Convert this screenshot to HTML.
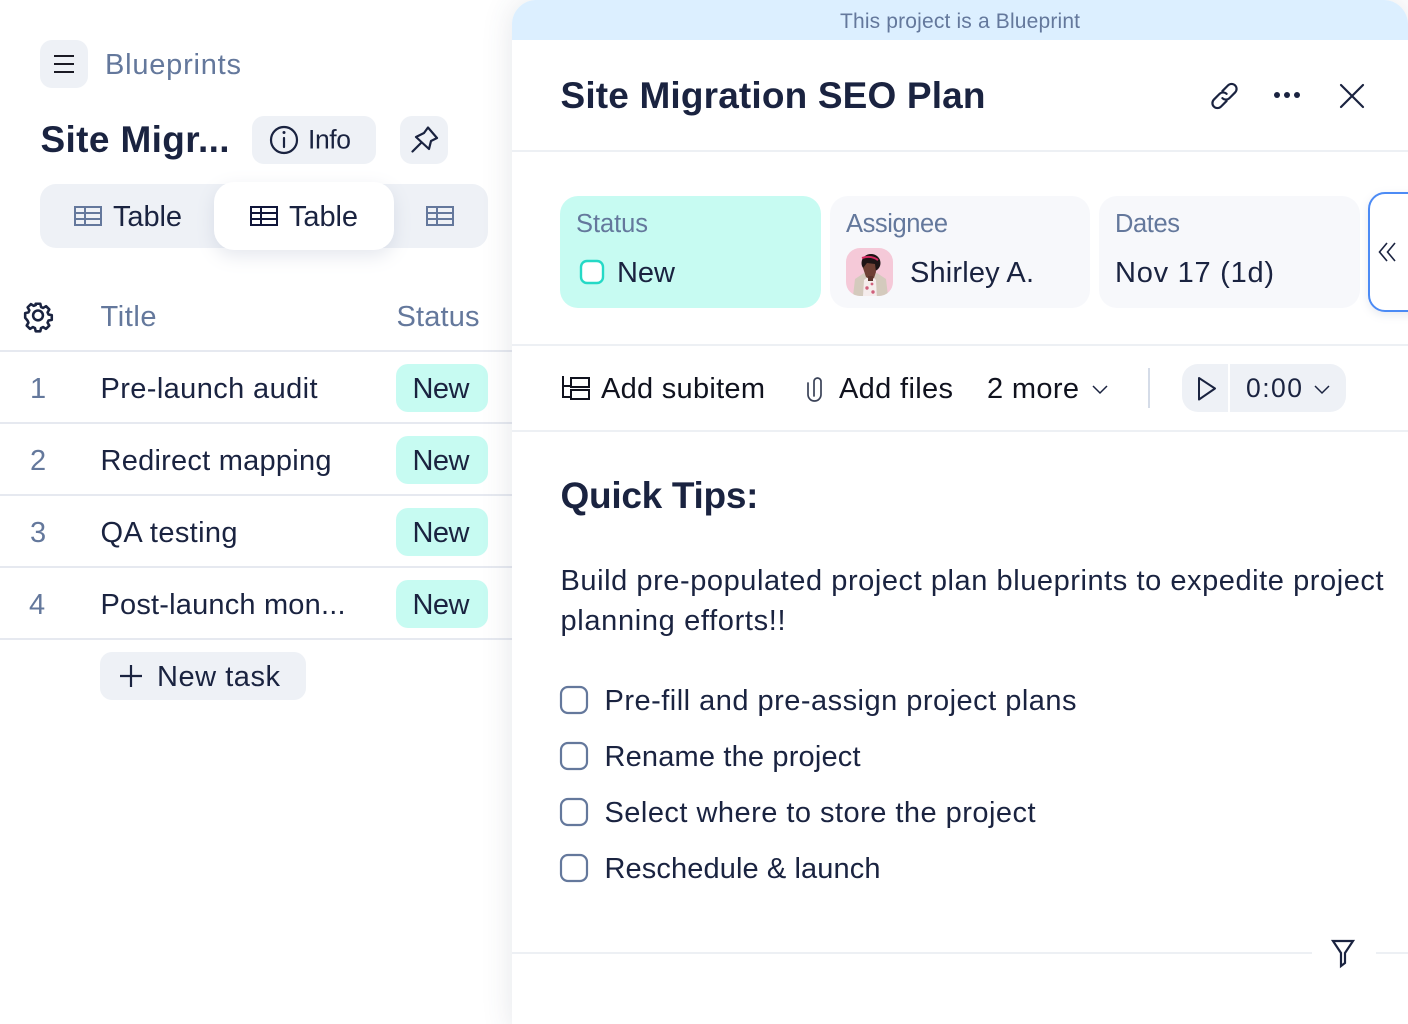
<!DOCTYPE html>
<html lang="en">
<head>
<meta charset="utf-8">
<title>Site Migration SEO Plan</title>
<style>
html,body{margin:0;padding:0;background:#fff;width:1408px;height:1024px;overflow:hidden}
svg{display:block}
text{font-family:"Liberation Sans",sans-serif;font-size:29px;fill:#1a2340}
.g{fill:#64789c}
.b{font-weight:700;font-size:37px}
.s{font-size:26.500px}
.ic{fill:none;stroke:#1a2340;stroke-width:2.2;stroke-linecap:round;stroke-linejoin:round}
.ig{fill:none;stroke:#64789c;stroke-width:2}
.ln{fill:#e6e9f0}
.rl{fill:#edf0f4}
.cb{fill:#fff;stroke:#64789c;stroke-width:2.200}
</style>
</head>
<body>
<svg width="1408" height="1024" viewBox="0 0 1408 1024" xmlns="http://www.w3.org/2000/svg">
<defs>
<filter id="ps" x="-20%" y="-10%" width="140%" height="120%"><feGaussianBlur stdDeviation="16"/></filter>
<filter id="ts" x="-30%" y="-50%" width="160%" height="220%"><feOffset dy="6"/><feGaussianBlur stdDeviation="9"/><feColorMatrix values="0 0 0 0 .2 0 0 0 0 .25 0 0 0 0 .4 0 0 0 .2 0"/></filter>
<filter id="cs" x="-50%" y="-30%" width="200%" height="160%"><feOffset dy="3"/><feGaussianBlur stdDeviation="5"/><feColorMatrix values="0 0 0 0 .2 0 0 0 0 .25 0 0 0 0 .4 0 0 0 .22 0"/></filter>
<clipPath id="av"><rect x="846" y="248" width="47" height="48" rx="14"/></clipPath>
</defs>

<!-- left header -->
<rect x="40" y="40" width="48" height="48" rx="12" fill="#eef1f6"/>
<path d="M54 56h20M54 64h20M54 72h20" stroke="#1a1a24" stroke-width="2" fill="none"/>
<text x="105" y="74" class="g" textLength="136" lengthAdjust="spacing">Blueprints</text>

<text x="40.500" y="152" class="b" textLength="189" lengthAdjust="spacing">Site Migr...</text>
<rect x="252" y="116" width="124" height="48" rx="12" fill="#eef1f6"/>
<circle cx="284" cy="140" r="13" class="ic" stroke-width="2"/>
<path d="M284 138v9" class="ic"/><circle cx="284" cy="132.500" r="1.500" fill="#1a2340"/>
<text x="308" y="148.500" class="s" textLength="43" lengthAdjust="spacing">Info</text>
<rect x="400" y="116" width="48" height="48" rx="12" fill="#eef1f6"/>
<path d="M412.500 151.500l9-9M428 127.500L437 138l-6 3-2 8-13-12 8-4z" class="ic" stroke-width="2"/>

<!-- tabs -->
<rect x="40" y="184" width="448" height="64" rx="16" fill="#eef1f6"/>
<g class="ig"><rect x="75" y="207" width="26" height="18"/><path d="M75 213h26M75 219h26M85 207v18"/></g>
<text x="113" y="226" textLength="69" lengthAdjust="spacing">Table</text>
<rect x="214" y="182" width="180" height="68" rx="20" fill="#000" filter="url(#ts)"/>
<rect x="214" y="182" width="180" height="68" rx="20" fill="#fff"/>
<g fill="none" stroke="#10163a" stroke-width="2"><rect x="251" y="207" width="26" height="18"/><path d="M251 213h26M251 219h26M261 207v18"/></g>
<text x="289" y="226" textLength="69" lengthAdjust="spacing">Table</text>
<g class="ig"><rect x="427" y="207" width="26" height="18"/><path d="M427 213h26M427 219h26M437 207v18"/></g>

<!-- table head -->
<g transform="translate(24 302) scale(1.167)"><path class="ic" stroke-width="1.800" d="M10 2h4l.6 2.800 1.800.8 2.500-1.500 2.800 2.800-1.500 2.500.8 1.800 2.800.6v4l-2.800.6-.8 1.800 1.500 2.500-2.800 2.800-2.500-1.500-1.800.8-.6 2.800h-4l-.6-2.800-1.800-.8-2.500 1.500-2.800-2.800 1.500-2.500-.8-1.800L1 14v-4l2.800-.6.800-1.800-1.500-2.500 2.800-2.800 2.500 1.500 1.800-.8z" transform="translate(0 -0.500)"/><circle cx="12" cy="11.500" r="4.200" class="ic" stroke-width="1.800"/></g>
<text x="100.500" y="326" class="g" textLength="56" lengthAdjust="spacing">Title</text>
<text x="396.500" y="326" class="g" textLength="83" lengthAdjust="spacing">Status</text>
<rect x="0" y="350" width="512" height="2" class="ln"/>

<!-- rows -->
<text x="30" y="398" class="g">1</text>
<text x="100.500" y="398" textLength="217" lengthAdjust="spacing">Pre-launch audit</text>
<rect x="396" y="364" width="92" height="48" rx="12" fill="#c7fbf2"/>
<text x="412.500" y="398" textLength="57" lengthAdjust="spacing">New</text>
<rect x="0" y="422" width="512" height="2" class="ln"/>

<text x="30" y="470" class="g">2</text>
<text x="100.500" y="470" textLength="231" lengthAdjust="spacing">Redirect mapping</text>
<rect x="396" y="436" width="92" height="48" rx="12" fill="#c7fbf2"/>
<text x="412.500" y="470" textLength="57" lengthAdjust="spacing">New</text>
<rect x="0" y="494" width="512" height="2" class="ln"/>

<text x="30" y="542" class="g">3</text>
<text x="100.500" y="542" textLength="137" lengthAdjust="spacing">QA testing</text>
<rect x="396" y="508" width="92" height="48" rx="12" fill="#c7fbf2"/>
<text x="412.500" y="542" textLength="57" lengthAdjust="spacing">New</text>
<rect x="0" y="566" width="512" height="2" class="ln"/>

<text x="29" y="614" class="g">4</text>
<text x="100.500" y="614" textLength="245" lengthAdjust="spacing">Post-launch mon...</text>
<rect x="396" y="580" width="92" height="48" rx="12" fill="#c7fbf2"/>
<text x="412.500" y="614" textLength="57" lengthAdjust="spacing">New</text>
<rect x="0" y="638" width="512" height="2" class="ln"/>

<rect x="100" y="652" width="206" height="48" rx="12" fill="#eef1f6"/>
<path d="M131 665v22M120 676h22" stroke="#1a2340" stroke-width="2.200" fill="none"/>
<text x="157" y="686" textLength="123" lengthAdjust="spacing">New task</text>

<!-- right panel -->
<rect x="512" y="0" width="896" height="1040" rx="24" fill="#3a4560" opacity=".13" filter="url(#ps)"/>
<path d="M512 1024V24C512 11 523 0 536 0h848c13 0 24 11 24 24v1000z" fill="#fff"/>
<path d="M512 40V24C512 11 523 0 536 0h848c13 0 24 11 24 24v16z" fill="#dcefff"/>
<text x="840" y="28" class="g" style="font-size:21px" textLength="240" lengthAdjust="spacing">This project is a Blueprint</text>

<text x="560.500" y="108" class="b" textLength="425" lengthAdjust="spacing">Site Migration SEO Plan</text>
<g class="ic" stroke-width="2" transform="translate(1224.500 96) rotate(-45)">
<path d="M2 -5H10a5 5 0 0 1 0 10H2a5 5 0 0 1-5-5"/>
<path d="M-2 5H-10a5 5 0 0 1 0-10H-2a5 5 0 0 1 5 5"/>
</g>
<circle cx="1277" cy="95" r="3" fill="#1a2340"/><circle cx="1287" cy="95" r="3" fill="#1a2340"/><circle cx="1297" cy="95" r="3" fill="#1a2340"/>
<path d="M1341 85l22 22M1363 85l-22 22" class="ic" stroke-width="2.200"/>
<rect x="512" y="150" width="896" height="2" class="rl"/>

<!-- cards -->
<rect x="560" y="196" width="261" height="112" rx="18" fill="#c7fbf2"/>
<text x="576" y="232" class="g" style="font-size:25.500px" textLength="72" lengthAdjust="spacing">Status</text>
<rect x="581" y="261" width="22" height="22" rx="6" fill="#fff" stroke="#25d9c6" stroke-width="2.400"/>
<text x="617" y="282" textLength="58" lengthAdjust="spacing">New</text>

<rect x="830" y="196" width="260" height="112" rx="18" fill="#f7f8fb"/>
<text x="846" y="232" class="g" style="font-size:25.500px" textLength="102" lengthAdjust="spacing">Assignee</text>
<g clip-path="url(#av)">
<rect x="846" y="248" width="47" height="48" fill="#f5c9d8"/>
<path d="M853 296l2-17 9-6 6 4 7-4 9 6 2 17z" fill="#d4cabd"/>
<path d="M863 296l1-16 5-4h3l4 4 1 20z" fill="#f5ecec"/>
<circle cx="867" cy="288" r="1.700" fill="#d0607c"/><circle cx="873" cy="292" r="1.700" fill="#d0607c"/><circle cx="872" cy="284" r="1.400" fill="#d0607c"/>
<ellipse cx="871" cy="263" rx="9.500" ry="9" fill="#1d1415"/>
<path d="M863 268l4-5 8 1 1 8-2 6-3 2-5-3z" fill="#6e4034"/>
<rect x="868" y="276" width="5" height="5" fill="#5c352c"/>
<path d="M862 258q9-3 16 2" stroke="#d22a60" stroke-width="2" fill="none"/>
</g>
<text x="910" y="282" textLength="124" lengthAdjust="spacing">Shirley A.</text>

<rect x="1099" y="196" width="261" height="112" rx="18" fill="#f7f8fb"/>
<text x="1115" y="232" class="g" style="font-size:25.500px" textLength="65" lengthAdjust="spacing">Dates</text>
<text x="1115" y="282" textLength="159" lengthAdjust="spacing">Nov 17 (1d)</text>

<rect x="1369" y="193" width="60" height="118" rx="16" fill="#000" filter="url(#cs)"/>
<rect x="1369" y="193" width="60" height="118" rx="16" fill="#fff" stroke="#4c8bf5" stroke-width="2"/>
<path d="M1387 243l-7.500 9 7.500 9M1395 243l-7.500 9 7.500 9" fill="none" stroke="#1a2340" stroke-width="1.600"/>

<rect x="512" y="344" width="896" height="2" class="rl"/>

<!-- toolbar -->
<g fill="none" stroke="#10121e" stroke-width="2"><path d="M563 376v21h8M563 386h8"/><rect x="571" y="378" width="18" height="9"/><rect x="571" y="390" width="18" height="9"/></g>
<text x="601" y="398" textLength="164" lengthAdjust="spacing" style="fill:#10121e">Add subitem</text>
<path d="M808 383V394.500a6.500 6.500 0 0 0 13 0V381.500a3.500 3.500 0 0 0-7 0V396" fill="none" stroke="#3a4258" stroke-width="1.700" stroke-linecap="round"/>
<text x="839" y="398" textLength="114" lengthAdjust="spacing" style="fill:#10121e">Add files</text>
<text x="987" y="398" textLength="92" lengthAdjust="spacing" style="fill:#10121e">2 more</text>
<path d="M1093 386l7 7 7-7" fill="none" stroke="#1a2340" stroke-width="1.500"/>
<rect x="1148" y="368" width="2" height="40" fill="#d5dce8"/>
<rect x="1182" y="364" width="164" height="48" rx="16" fill="#eef1f6"/>
<rect x="1228" y="364" width="2" height="48" fill="#fff"/>
<path d="M1199 378l16 10.500-16 11z" fill="none" stroke="#1a2340" stroke-width="2" stroke-linejoin="round"/>
<text x="1246" y="397" class="s" textLength="56" lengthAdjust="spacing">0:00</text>
<path d="M1315 386l7 7 7-7" fill="none" stroke="#1a2340" stroke-width="1.500"/>
<rect x="512" y="430" width="896" height="2" class="rl"/>

<!-- content -->
<text x="560.500" y="508" class="b" textLength="198" lengthAdjust="spacing">Quick Tips:</text>
<text x="560.500" y="590" textLength="823" lengthAdjust="spacing">Build pre-populated project plan blueprints to expedite project</text>
<text x="560.500" y="630" textLength="225" lengthAdjust="spacing">planning efforts!!</text>

<rect x="561" y="687" width="26" height="26" rx="7" class="cb"/>
<text x="604.500" y="710" textLength="472" lengthAdjust="spacing">Pre-fill and pre-assign project plans</text>
<rect x="561" y="743" width="26" height="26" rx="7" class="cb"/>
<text x="604.500" y="766" textLength="256" lengthAdjust="spacing">Rename the project</text>
<rect x="561" y="799" width="26" height="26" rx="7" class="cb"/>
<text x="604.500" y="822" textLength="431" lengthAdjust="spacing">Select where to store the project</text>
<rect x="561" y="855" width="26" height="26" rx="7" class="cb"/>
<text x="604.500" y="878" textLength="276" lengthAdjust="spacing">Reschedule &amp; launch</text>

<!-- footer divider -->
<rect x="512" y="952" width="800" height="2" class="rl"/>
<rect x="1376" y="952" width="32" height="2" class="rl"/>
<path d="M1333 941h20l-8 12v10l-4 3v-13z" fill="none" stroke="#1a2340" stroke-width="2.200" stroke-linejoin="miter"/>
</svg>
</body>
</html>
